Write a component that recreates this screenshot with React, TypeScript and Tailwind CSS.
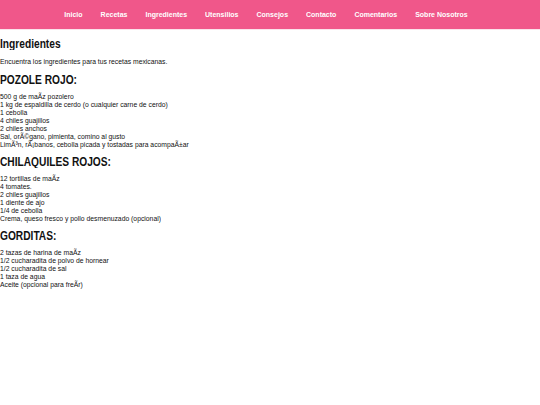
import React from 'react';

const navItems = ['Inicio', 'Recetas', 'Ingredientes', 'Utensilios', 'Consejos', 'Contacto', 'Comentarios', 'Sobre Nosotros'];

const recipes = [
    {
        title: 'POZOLE ROJO:',
        items: [
            '500 g de maÃ\u00adz pozolero',
            '1 kg de espaldilla de cerdo (o cualquier carne de cerdo)',
            '1 cebolla',
            '4 chiles guajillos',
            '2 chiles anchos',
            'Sal, orÃ©gano, pimienta, comino al gusto',
            'LimÃ³n, rÃ¡banos, cebolla picada y tostadas para acompaÃ±ar',
        ],
    },
    {
        title: 'CHILAQUILES ROJOS:',
        items: [
            '12 tortillas de maÃ\u00adz',
            '4 tomates.',
            '2 chiles guajillos',
            '1 diente de ajo',
            '1/4 de cebolla',
            'Crema, queso fresco y pollo desmenuzado (opcional)',
        ],
    },
    {
        title: 'GORDITAS:',
        items: [
            '2 tazas de harina de maÃ\u00adz',
            '1/2 cucharadita de polvo de hornear',
            '1/2 cucharadita de sal',
            '1 taza de agua',
            'Aceite (opcional para freÃ\u00adr)',
        ],
    },
];

const App: React.FC = () => {
    return (
        <div className="min-h-screen bg-white text-[#111] font-['Liberation_Sans',Arial,sans-serif]">
            {/* Nav */}
            <nav className="h-[30px] bg-[#f0578a] border-b border-[#fbe3eb] flex items-center justify-center pr-[8px]">
                <ul className="flex gap-[18px]">
                    {navItems.map((item) => (
                        <li key={item} className="text-[7px] font-bold text-white leading-none scale-y-[1.15]">
                            {item}
                        </li>
                    ))}
                </ul>
            </nav>

            <div className="pt-[7px]">
                <h1 className="text-[10.2px] font-bold leading-[14px] scale-y-[1.2] origin-left">Ingredientes</h1>
                <p className="mt-[7px] text-[6.8px] leading-[8px] scale-y-[1.15] origin-left">
                    Encuentra los ingredientes para tus recetas mexicanas.
                </p>

                {recipes.map((r, idx) => (
                    <div key={r.title} className={idx === 0 ? 'mt-[7px]' : 'mt-[6px]'}>
                        <h2 className="text-[10.2px] font-bold leading-[14px] scale-y-[1.2] origin-left">{r.title}</h2>
                        <ul className="mt-[6px] text-[6.8px] leading-[8px]">
                            {r.items.map((it, i) => (
                                <li key={i} className="scale-y-[1.15] origin-left">
                                    {it}
                                </li>
                            ))}
                        </ul>
                    </div>
                ))}
            </div>
        </div>
    );
};

export default App;
